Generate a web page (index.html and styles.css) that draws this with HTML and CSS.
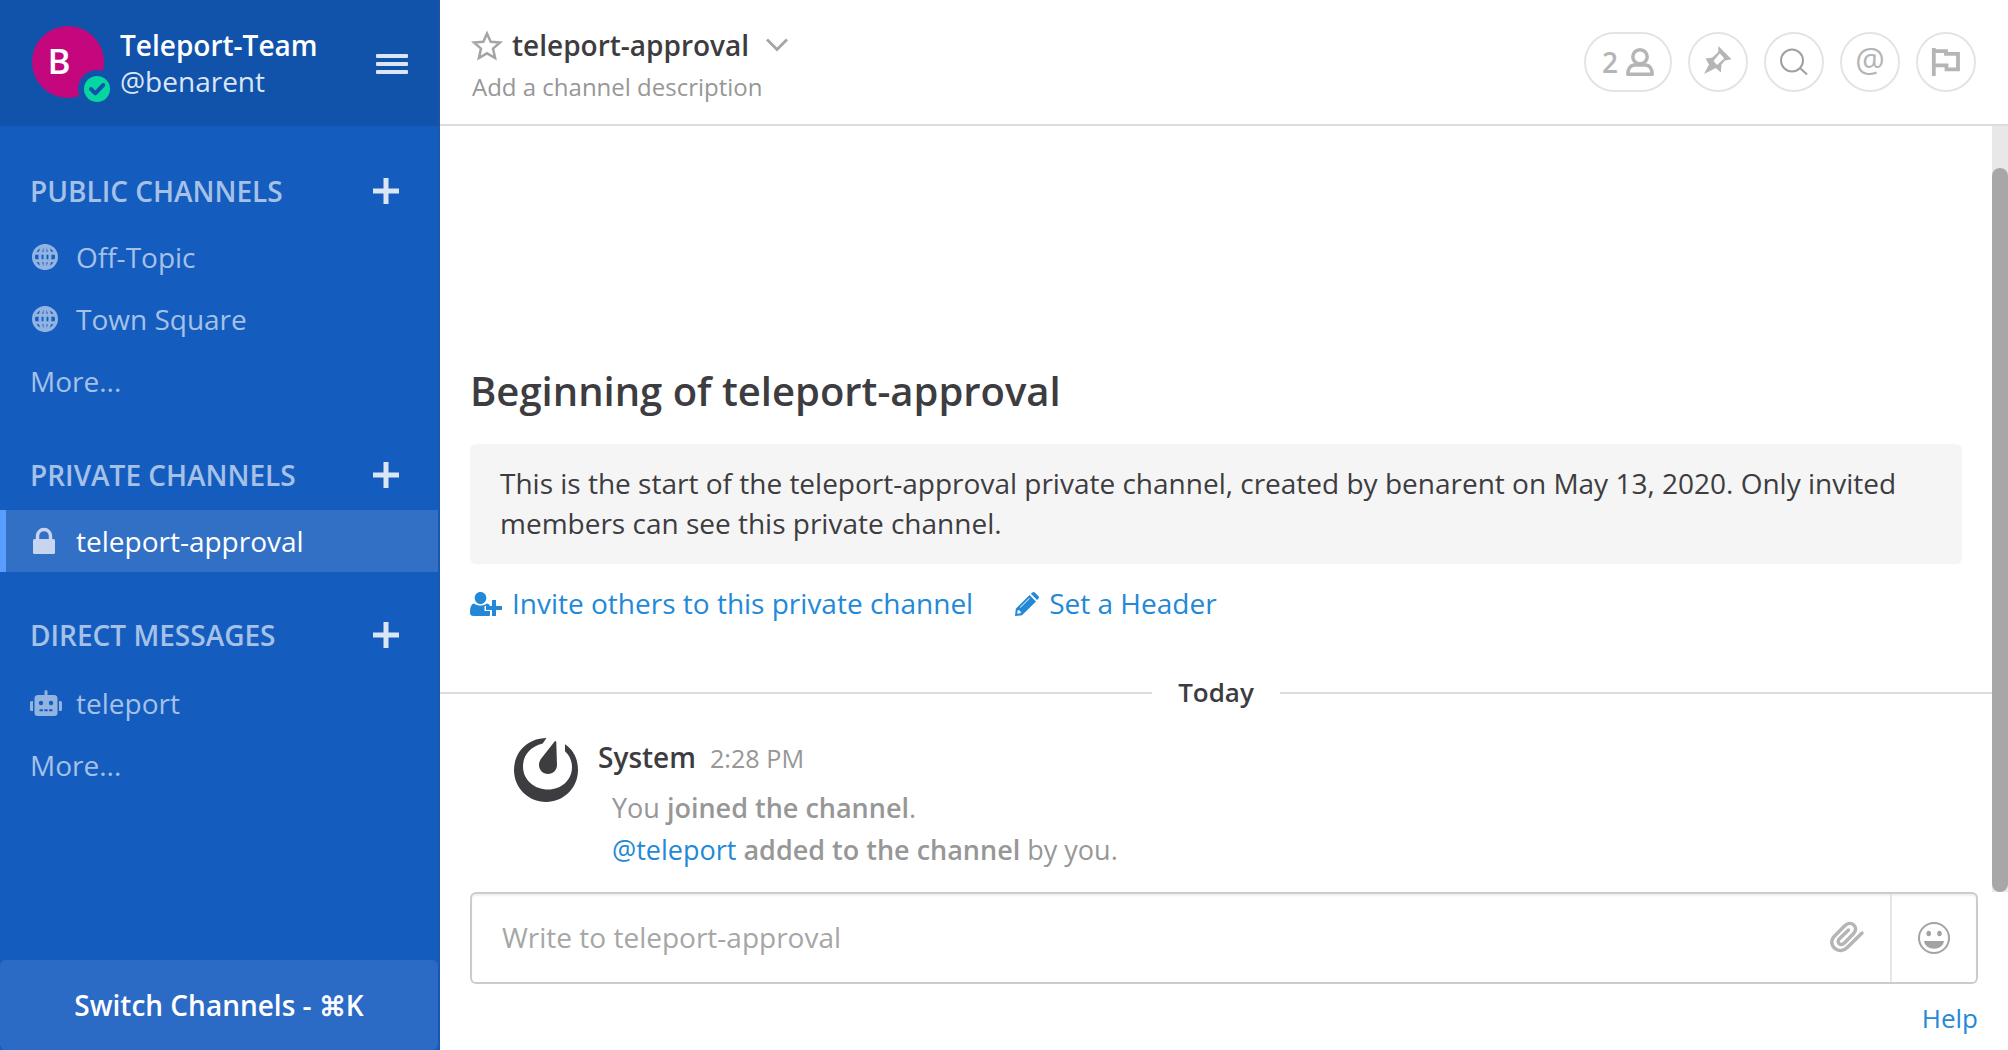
FILE: index.html
```html
<!DOCTYPE html>
<html lang="en">
<head>
<meta charset="utf-8">
<title>teleport-approval - Teleport-Team</title>
<link rel="stylesheet" href="styles.css">
</head>
<body>
<div class="app">
  <aside class="sidebar">
    <header class="team">
      <div class="avatar"><span class="avatar-letter">B</span>
        <svg class="status" width="38" height="38" viewBox="0 0 38 38"><circle class="status-ring" cx="19" cy="19" r="19"/><circle class="status-dot" cx="19" cy="19" r="13"/><path class="status-check" d="M13 19l4.300 4.300 8-8.300"/></svg>
      </div>
      <div class="team-text"><div class="team-name">Teleport-Team</div><div class="user-name">@benarent</div></div>
      <svg class="menu" width="32" height="20" viewBox="0 0 32 20"><rect width="32" height="4" rx="1"/><rect y="8" width="32" height="4" rx="1"/><rect y="16" width="32" height="4" rx="1"/></svg>
    </header>
    <nav class="channels">
      <section class="group">
        <h2 class="group-title"><span>PUBLIC CHANNELS</span><svg class="plus" width="26" height="26" viewBox="0 0 26 26"><path d="M13 0v26M0 13h26"/></svg></h2>
        <a class="channel"><svg class="channel-icon" width="26" height="26" viewBox="0 0 26 26"><g class="globe"><circle cx="13" cy="13" r="11.500"/><ellipse cx="13" cy="13" rx="5" ry="11.500"/><path d="M13 1.500v23M2 9.300h22M2 16.700h22"/></g></svg><span>Off-Topic</span></a>
        <a class="channel"><svg class="channel-icon" width="26" height="26" viewBox="0 0 26 26"><g class="globe"><circle cx="13" cy="13" r="11.500"/><ellipse cx="13" cy="13" rx="5" ry="11.500"/><path d="M13 1.500v23M2 9.300h22M2 16.700h22"/></g></svg><span>Town Square</span></a>
        <a class="channel">More...</a>
      </section>
      <section class="group">
        <h2 class="group-title"><span>PRIVATE CHANNELS</span><svg class="plus" width="26" height="26" viewBox="0 0 26 26"><path d="M13 0v26M0 13h26"/></svg></h2>
        <a class="channel active"><svg class="channel-icon lock" width="24" height="26" viewBox="0 0 24 26"><rect x="1" y="11" width="22" height="15" rx="1.500"/><path d="M5.500 12V8a6.500 6.500 0 0 1 13 0v4"/></svg><span>teleport-approval</span></a>
      </section>
      <section class="group direct">
        <h2 class="group-title"><span>DIRECT MESSAGES</span><svg class="plus" width="26" height="26" viewBox="0 0 26 26"><path d="M13 0v26M0 13h26"/></svg></h2>
        <a class="channel"><svg class="channel-icon bot" width="32" height="26" viewBox="0 0 32 26"><path fill-rule="evenodd" d="M14.500 1.500a1.500 1.500 0 0 1 3 0V5H24a3.500 3.500 0 0 1 3.500 3.500V23a3 3 0 0 1-3 3h-17a3 3 0 0 1-3-3V8.500A3.500 3.500 0 0 1 8 5h6.500zM11 10.800a2.200 2.200 0 1 0 0 4.400 2.200 2.200 0 0 0 0-4.400zM21 10.800a2.200 2.200 0 1 0 0 4.400 2.200 2.200 0 0 0 0-4.400zM9.500 19.300v2h3.400v-2zM14.300 19.300v2h3.400v-2zM19.100 19.300v2h3.400v-2zM0 12.500q0-1.500 1.500-1.500H3v10H1.500Q0 21 0 19.500zM29 11h1.500q1.500 0 1.500 1.500v7q0 1.500-1.500 1.500H29z"/></svg><span>teleport</span></a>
        <a class="channel">More...</a>
      </section>
    </nav>
    <button class="switcher">Switch Channels - <span class="key">⌘</span>K</button>
  </aside>
  <main class="center">
    <header class="channel-header">
      <div class="channel-info">
        <div class="channel-title">
          <svg class="star" width="30" height="30" viewBox="0 0 30 30"><path d="M15 3.500l3.700 8.200 9.300.8-7 6.100 2.100 9.400L15 23.300 6.900 28 9 18.600l-7-6.100 9.300-.8z"/></svg>
          <h1>teleport-approval</h1>
          <svg class="chevron" width="22" height="14" viewBox="0 0 22 14"><path d="M1 1.500l10 10 10-10"/></svg>
        </div>
        <div class="description">Add a channel description</div>
      </div>
      <div class="tools">
        <button class="tool members"><span>2</span><svg width="28" height="28" viewBox="0 0 28 28"><g class="line person"><ellipse cx="14" cy="8.700" rx="7.200" ry="7"/><path stroke-linejoin="round" d="M9 17C4.500 17 1.800 20.500 1.800 26.300h24.400C26.200 20.500 23.500 17 19 17z"/></g></svg></button>
        <button class="tool"><svg class="pin" width="28" height="28" viewBox="0 0 28 28"><path class="solid" fill-rule="evenodd" d="M14.300 0L27.500 13.300l-6.500 1.200-3.500 4L16.800 26.500 11.800 22 0 28 5 18.500 1.500 12.500l6.500-.7 6.300-5.800zM15.800 7.200L9.500 15l3.500 4 7.200-6.500z"/></svg></button>
        <button class="tool"><svg width="28" height="28" viewBox="0 0 28 28"><g class="search"><circle cx="12" cy="12.500" r="11"/><path d="M20 20l7 6.500"/></g></svg></button>
        <button class="tool"><span class="at">@</span></button>
        <button class="tool"><svg width="28" height="28" viewBox="0 0 28 28"><path class="line" d="M1.800 0v28M2 3.200h12v2.600h12v15.500H14.500v-4H2"/></svg></button>
      </div>
    </header>
    <div class="posts">
      <div class="post-list">
        <section class="intro">
          <h2>Beginning of teleport-approval</h2>
          <p>This is the start of the teleport-approval private channel, created by benarent on May 13, 2020. Only invited members can see this private channel.</p>
          <div class="intro-links">
            <a class="link"><svg width="32" height="24" viewBox="0 0 32 24"><path d="M10.500 0c3.300 0 5.800 2.600 5.800 6s-2.500 6-5.800 6-5.800-2.600-5.800-6 2.500-6 5.800-6zM4 11.500c4 2.700 9 2.700 13 0 1.500.3 2.200 1 3 2.500h-5.500v5H20v4.500q-1 .5-2 .5H3.500Q0 24 0 20.500C0 16 1 12 4 11.500zM22 8h4v6h6v4h-6v6h-4v-6h-6v-4h6z"/></svg><span>Invite others to this private channel</span></a>
            <a class="link"><svg width="24" height="24" viewBox="0 0 24 24"><path fill-rule="evenodd" d="M14.500 3l6.500 6.500L7 23.200 0 24l.8-7.300zM16 1.700l1.300-1.200q1.400-1 2.800.2l3.200 3.200q1.400 1.400 0 2.800L22 8zM2.600 18.500L2.200 21.800l3.300-.5.500-1.300-2.200-2zM14.200 6l-9.300 9.200.5.500 9.300-9.200z"/></svg><span>Set a Header</span></a>
          </div>
        </section>
        <div class="day"><span>Today</span></div>
        <article class="post">
          <svg class="logo" width="64" height="64" viewBox="0 0 64 64"><path d="M32.500 0C12 .5 0 15.500 0 32c0 18 14.500 32 32 32s32-14 32-32C64 20.500 59 11.500 51 6.300V13.300c4.500 4 7 9.700 7 15.700 0 13-10.500 22.500-24 22.500S9 42 9 28.500C9 17 16.500 8.500 28.700 5.500z"/><path d="M41 3Q42.300 2.500 42.300 5L43 27c0 5-4 9-9 9s-9-4-9-9c0-3 1-5 3-7.500z"/></svg>
          <div class="post-content">
            <div class="post-head"><strong>System</strong><time>2:28 PM</time></div>
            <div class="post-body"><p>You <b>joined the channel</b>.</p><p><a>@teleport</a> <b>added to the channel</b> by you.</p></div>
          </div>
        </article>
      </div>
      <div class="scrollbar"><div class="thumb"></div></div>
    </div>
    <footer class="composer">
      <div class="input">
        <span class="placeholder">Write to teleport-approval</span>
        <svg class="clip" width="34" height="32" viewBox="0 0 34 32"><path d="M32 12L17.500 26.200c-4 4-9 4.200-12.700 1.200-4-3.500-4-8.700 0-12.700L14.500 5c3-3 6.700-3.300 9.300-1s2.300 6-.4 8.800l-9.300 9.500c-1.500 1.500-3.600 1.600-5 .3s-1.200-3.300.3-4.800L18.500 9"/></svg>
        <div class="emoji"><svg width="32" height="32" viewBox="0 0 32 32"><circle class="face" cx="16" cy="16" r="15"/><ellipse cx="10.700" cy="11.500" rx="2.300" ry="2.700"/><ellipse cx="21.500" cy="11.500" rx="2.300" ry="2.700"/><path d="M6 19h20c-.7 4.800-5 7.700-10 7.700S6.700 23.800 6 19z"/></svg></div>
      </div>
      <a class="help">Help</a>
    </footer>
  </main>
</div>
</body>
</html>
```
FILE: styles.css
```css
* { box-sizing: border-box; }
body { margin: 0; font-family: "Open Sans", "Noto Sans", sans-serif; font-size: 28px; line-height: 40px; color: #3d3c40; background: #fff; }
h1, h2, p { margin: 0; }
h1, h2, b, strong { font-weight: 600; }
button { font: inherit; color: inherit; padding: 0; }
svg { display: block; flex: none; overflow: visible; }
.app { display: flex; height: 1050px; overflow: hidden; }

.sidebar { width: 440px; flex: none; display: flex; flex-direction: column; background: #145dbf; border-right: 2px solid #1c58b0; }
.team { height: 126px; display: flex; align-items: flex-start; padding: 26px 30px 0 32px; background: #1153ab; margin-right: -2px; border-right: 2px solid #1c54a5; }
.avatar { position: relative; width: 72px; height: 72px; border-radius: 50%; background: #c4077d; color: #fff; }
.avatar-letter { display: block; width: 54px; text-align: center; font-size: 35px; font-weight: 600; line-height: 69px; }
.status { position: absolute; left: 46px; top: 44px; }
.status-ring { fill: #1153ab; }
.status-dot { fill: #06d6a0; }
.status-check { fill: none; stroke: #1153ab; stroke-width: 4; stroke-linecap: round; stroke-linejoin: round; }
.team-text { margin-left: 16px; flex: 1; line-height: 36px; }
.team-name { color: #fff; font-weight: 600; margin-top: 1px; }
.user-name { color: #dbe6f5; }
.menu { margin-top: 28px; fill: #dbe6f5; }

.channels { flex: 1; padding-top: 2px; }
.group { padding-top: 28px; }
.group-title { display: flex; align-items: center; justify-content: space-between; height: 70px; padding: 0 39px 0 30px; font-size: 28px; font-weight: 600; color: #a6c1e7; }
.plus { stroke: #dbe6f5; stroke-width: 5; }
.channel { display: flex; align-items: center; height: 62px; padding-left: 30px; color: #a6c1e7; }
.channel-icon { margin: 0 18px 0 2px; fill: #93b3e1; }
.globe { fill: none; stroke: #93b3e1; stroke-width: 3; }
.lock { fill: #c7d6ee; margin-right: 20px; }
.lock path { fill: none; stroke: #c7d6ee; stroke-width: 3.400; }
.bot { margin: 0 14px 0 0; }
.channel.active { color: #fff; background: #3270c6; border-left: 6px solid #579eff; padding-left: 24px; }
.direct .group-title { margin-bottom: 2px; }
.switcher { height: 90px; border: 0; border-radius: 6px; background: #2b6bc5; color: #fff; font-weight: 600; }
.key { font-size: 27px; font-weight: 400; -webkit-text-stroke: 0.6px #fff; }

.center { flex: 1; display: flex; flex-direction: column; min-width: 0; }
.channel-header { height: 126px; flex: none; border-bottom: 2px solid #dcdcdc; display: flex; justify-content: space-between; padding: 0 32px; }
.channel-info { padding-top: 25px; }
.channel-title { display: flex; align-items: center; }
.channel-title h1 { font-size: 28px; margin: 0 17px 0 10px; }
.star { fill: none; stroke: #a5a5a5; stroke-width: 2.500; }
.chevron { fill: none; stroke: #a5a5a5; stroke-width: 2.800; }
.description { font-size: 24px; line-height: 44px; color: #979797; }
.tools { display: flex; gap: 16px; padding-top: 32px; }
.tool { width: 60px; height: 60px; border: 2px solid #e4e4e4; border-radius: 30px; background: #fff; color: #b5b5b5; display: flex; align-items: center; justify-content: center; }
.members { width: 88px; gap: 8px; font-weight: 600; }
.pin { margin-bottom: 4px; }
.line { fill: none; stroke: #b5b5b5; stroke-width: 3.800; }
.person { stroke-width: 3.500; }
.solid { fill: #b5b5b5; }
.search { fill: none; stroke: #a0a0a0; stroke-width: 2; }
.at { font-size: 33px; line-height: 54px; height: 58px; font-weight: 500; }

.posts { height: 766px; flex: none; display: flex; }
.post-list { flex: 1; display: flex; flex-direction: column; justify-content: flex-end; padding-bottom: 21px; }
.scrollbar { width: 16px; background: #e8e8e8; padding-top: 42px; }
.thumb { height: 724px; border-radius: 8px; background: #a7a7a7; }
.intro { padding: 0 30px; }
.intro h2 { font-size: 40px; line-height: 56px; margin-bottom: 25px; }
.intro p { padding: 19px 30px 21px; height: 120px; background: #f5f5f5; border-radius: 6px; }
.intro-links { display: flex; gap: 42px; height: 40px; margin-top: 19px; color: #2389d7; }
.link { display: flex; align-items: center; gap: 10px; fill: #2389d7; }
.link svg { margin-top: 1px; }
.day { display: flex; align-items: center; gap: 26px; height: 40px; margin-top: 50px; font-size: 26px; font-weight: 600; }
.day span { margin-top: -2px; }
.day::before, .day::after { content: ""; flex: 1; height: 2px; background: #dcdcdc; }
.post { display: flex; margin-top: 24px; padding-left: 74px; }
.logo { fill: #3d3c40; margin-top: 1px; }
.post-content { margin-left: 20px; }
.post-head { display: flex; gap: 14px; height: 40px; margin-bottom: 10px; align-items: baseline; }
.post-head time { font-size: 25.200px; color: #979797; }
.post-body { padding-left: 14px; font-size: 27px; color: #979797; line-height: 42px; }
.post-body a { color: #2389d7; }

.composer { padding: 0 30px; }
.input { height: 92px; border: 2px solid #ccc; border-radius: 6px; display: flex; align-items: center; padding-left: 30px; box-shadow: inset 0 2px 2px rgba(0,0,0,.06); }
.placeholder { flex: 1; color: #a6a6a6; margin-top: -2px; }
.clip { fill: none; stroke: #b5b5b5; stroke-width: 3.500; stroke-linecap: round; margin: -2px 26px 0 0; }
.emoji { width: 86px; height: 88px; border-left: 2px solid #e6e6e6; display: flex; align-items: center; justify-content: center; fill: #a3a3a3; }
.face { fill: none; stroke: #a3a3a3; stroke-width: 2; }
.help { display: block; text-align: right; font-size: 26px; margin-top: 14px; color: #2389d7; }
```
